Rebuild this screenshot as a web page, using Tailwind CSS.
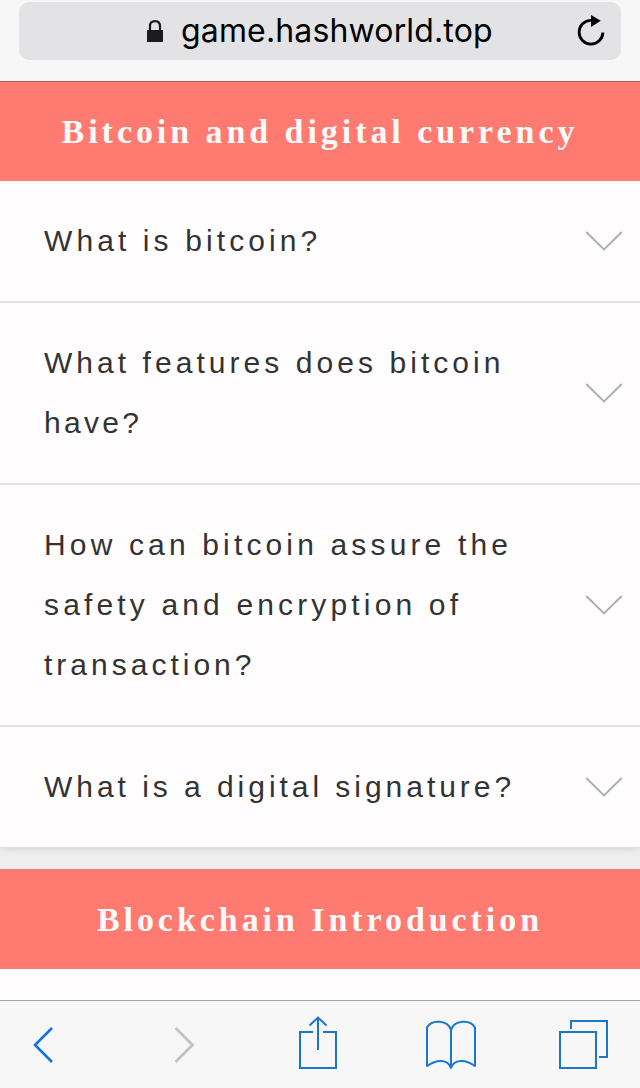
<!DOCTYPE html>
<html lang="en">
<head>
  <meta charset="UTF-8">
  <meta name="viewport" content="width=device-width, initial-scale=1.0">
  <title>Bitcoin and digital currency</title>
  <script src="https://cdn.jsdelivr.net/npm/@tailwindcss/browser@4"></script>
</head>
<body class="bg-[#efefef]">
  <div class="flex h-[1088px] w-[640px] flex-col overflow-hidden">

    <!-- Address bar -->
    <header class="h-[82px] shrink-0 border-b border-[#a8605c] bg-[#f7f7f8] px-[19px] pt-0.5">
      <div class="flex h-[58px] items-center rounded-[10px] bg-[#e3e3e5] pl-32 pr-4">
        <svg class="h-[22px] w-4 shrink-0" viewBox="0 0 16 22" fill="none">
          <path d="M3 11V6.500C3 3 5 1.200 8 1.200S13 3 13 6.500V11" stroke="#1c1a1e" stroke-width="2.2"/>
          <rect y="10" width="16" height="12" rx="0.5" fill="#1c1a1e"/>
        </svg>
        <span class="ml-[18px] whitespace-nowrap font-['Inter',sans-serif] text-[32px] leading-[58px] tracking-[0.15px] text-black">game.hashworld.top</span>
        <svg class="ml-auto h-8 w-[28px] shrink-0" viewBox="0 0 28 32" fill="none">
          <path d="M14 5.300A11.900 11.900 0 1 0 25.900 17.500" stroke="#000" stroke-width="2.8"/>
          <path d="M14 0L23.800 5.800L14 12Z" fill="#000"/>
        </svg>
      </div>
    </header>

    <main class="flex-1 overflow-hidden">
      <section>
        <h2 class="relative h-[99px] bg-[#ff7a70] text-center font-['Liberation_Serif',serif] text-[34px] font-bold leading-[100px] tracking-[3.94px] text-[#fffafa]">Bitcoin and digital currency</h2>
        <ul class="bg-[#fffdfe] font-['Liberation_Sans',sans-serif] text-[30px] leading-[60px] text-[#333] shadow-[0_2px_8px_rgba(0,0,0,0.12)]">
          <li class="flex items-center justify-between border-b-2 border-[#e4e2e4] py-[30px] pl-[44px] pr-[17px]">
            <p class="tracking-[4.1px]">What is bitcoin?</p>
            <svg class="mb-px h-5 w-[38px] shrink-0" viewBox="0 0 38 20" fill="none" stroke="#adadad" stroke-width="1.9"><path d="M1.3 1L19 18.500L36.700 1"/></svg>
          </li>
          <li class="flex items-center justify-between border-b-2 border-[#e4e2e4] py-[30px] pl-[44px] pr-[17px]">
            <p class="tracking-[4.05px]">What features does bitcoin<br><span class="tracking-[3.3px]">have?</span></p>
            <svg class="mb-px h-5 w-[38px] shrink-0" viewBox="0 0 38 20" fill="none" stroke="#adadad" stroke-width="1.9"><path d="M1.3 1L19 18.500L36.700 1"/></svg>
          </li>
          <li class="flex items-center justify-between border-b-2 border-[#e4e2e4] py-[30px] pl-[44px] pr-[17px]">
            <p class="tracking-[4.15px]">How can bitcoin assure the<br>safety and encryption of<br><span class="tracking-[4px]">transaction?</span></p>
            <svg class="mb-px h-5 w-[38px] shrink-0" viewBox="0 0 38 20" fill="none" stroke="#adadad" stroke-width="1.9"><path d="M1.3 1L19 18.500L36.700 1"/></svg>
          </li>
          <li class="flex items-center justify-between py-[30px] pl-[44px] pr-[17px]">
            <p class="tracking-[3.96px]">What is a digital signature?</p>
            <svg class="mb-px h-5 w-[38px] shrink-0" viewBox="0 0 38 20" fill="none" stroke="#adadad" stroke-width="1.9"><path d="M1.3 1L19 18.500L36.700 1"/></svg>
          </li>
        </ul>
      </section>

      <section class="mt-[22px]">
        <h2 class="relative h-[100px] bg-[#ff7a70] text-center font-['Liberation_Serif',serif] text-[34px] font-bold leading-[102px] tracking-[3.94px] text-[#fffafa]">Blockchain Introduction</h2>
        <div class="h-10 bg-[#fffdfe]"></div>
      </section>
    </main>

    <!-- Bottom toolbar -->
    <nav class="flex h-[88px] shrink-0 border-t border-[#a9a5a9] bg-[#f7f7f7] pl-[33px] pt-[15px]">
      <svg class="h-14 w-5" viewBox="0 0 20 56" fill="none" stroke="#1173dc" stroke-width="2.6"><path d="M19 12L2 29L19 46"/></svg>
      <svg class="ml-[121px] h-14 w-5" viewBox="0 0 20 56" fill="none" stroke="#c2c2c2" stroke-width="2.8"><path d="M1.500 12L18.500 29L1.500 46"/></svg>
      <svg class="ml-[105px] h-14 w-[38px]" viewBox="0 0 38 56" fill="none" stroke="#1a76cb" stroke-width="2">
        <path d="M14 16H1V52H37V16H24"/>
        <path d="M19 34V2M10.500 9.500L19 1.500L27.500 9.500"/>
      </svg>
      <svg class="ml-[89px] h-14 w-[50px]" viewBox="0 0 50 56" fill="none" stroke="#1a76d3" stroke-width="2" stroke-linejoin="round">
        <path d="M25 14C22 4 6 3 1 11.500V50C11 43 22 43 25 52C28 43 39 43 49 50V11.500C44 3 28 4 25 14Z"/>
        <path d="M25 14V52"/>
      </svg>
      <svg class="ml-[83px] h-14 w-[50px]" viewBox="0 0 50 56" fill="none" stroke="#1a76cb" stroke-width="2">
        <path d="M1 16H37V52H1Z"/>
        <path d="M12 13V5H48V41H40"/>
      </svg>
    </nav>
  </div>
</body>
</html>
